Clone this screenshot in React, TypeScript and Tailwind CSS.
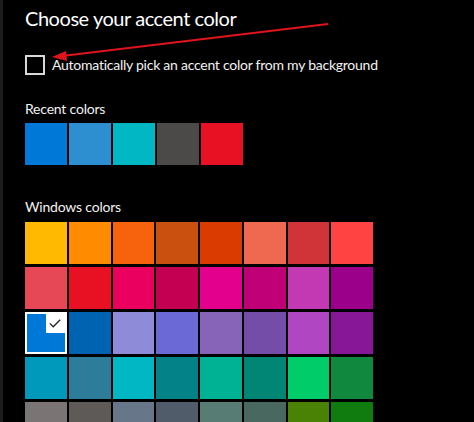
import React from "react";

const recentColors = ["#0078d7", "#2d8fcf", "#00b7c3", "#4c4a48", "#e81123"];

const windowsColors = [
  ["#ffb900", "#ff8c00", "#f7630c", "#ca5010", "#da3b01", "#ef6950", "#d13438", "#ff4343"],
  ["#e74856", "#e81123", "#ea005e", "#c30052", "#e3008c", "#bf0077", "#c239b3", "#9a0089"],
  ["#0078d7", "#0063b1", "#8e8cd8", "#6b69d6", "#8764b8", "#744da9", "#b146c2", "#881798"],
  ["#0099bc", "#2d7d9a", "#00b7c3", "#038387", "#00b294", "#018574", "#00cc6a", "#10893e"],
  ["#7a7574", "#5d5a58", "#68768a", "#515c6b", "#567c73", "#486860", "#498205", "#107c10"],
];

const selected = "#0078d7";

function Swatch({ color, active }: { color: string; active?: boolean }) {
  if (!active) {
    return <div className="h-[42px]" style={{ backgroundColor: color }} />;
  }
  return (
    <div className="relative h-[42px] border-2 border-white" style={{ backgroundColor: color }}>
      {/* check corner */}
      <div className="absolute right-0 top-0 flex h-[19px] w-[19px] items-center justify-center bg-white">
        <svg width="12" height="9" viewBox="0 0 12 9" fill="none">
          <path d="M0.8 4.4 L4.2 7.8 L11.2 0.8" stroke="#222" strokeWidth="1.3" />
        </svg>
      </div>
    </div>
  );
}

export default function App() {
  return (
    <div
      className="relative flex h-[422px] w-[474px] overflow-hidden bg-black text-white"
      style={{ fontFamily: 'Lato, "Open Sans", sans-serif' }}
    >
      <div className="w-[3px] shrink-0 bg-[#1c1c1c]" />
      <div className="flex flex-col pl-[22px]">
        <h1 className="mt-[4px] text-[20px] leading-[28px] font-normal tracking-[-0.45px] text-white">
          Choose your accent color
        </h1>

        <div className="mt-[23px] flex items-center gap-[7px]">
          <div className="h-[20px] w-[20px] border-2 border-[#d8d8d8]" />
          <span className="text-[14px] leading-[20px] tracking-[-0.25px] text-[#f2f2f2]">
            Automatically pick an accent color from my background
          </span>
        </div>

        <div className="mt-[24px] text-[14px] leading-[20px] tracking-[-0.2px] text-[#f2f2f2]">
          Recent colors
        </div>
        <div className="mt-[4px] flex gap-[2px]">
          {recentColors.map((c) => (
            <div key={c} className="h-[42px] w-[42px]" style={{ backgroundColor: c }} />
          ))}
        </div>

        <div className="mt-[32px] text-[14px] leading-[20px] tracking-[-0.2px] text-[#f2f2f2]">
          Windows colors
        </div>
        <div className="mt-[5px] grid w-[348px] grid-cols-8 gap-x-[2px] gap-y-[3px]">
          {windowsColors.map((row, r) =>
            row.map((c, i) => (
              <Swatch key={`${r}-${i}`} color={c} active={r === 2 && i === 0 && c === selected} />
            ))
          )}
        </div>
      </div>

      {/* red annotation arrow */}
      <svg className="pointer-events-none absolute left-0 top-0" width="474" height="422">
        <line x1="328" y1="24" x2="62" y2="56" stroke="#e0141c" strokeWidth="2.2" />
        <polygon points="52,57 66,51 67,61" fill="#e0141c" />
      </svg>
    </div>
  );
}
